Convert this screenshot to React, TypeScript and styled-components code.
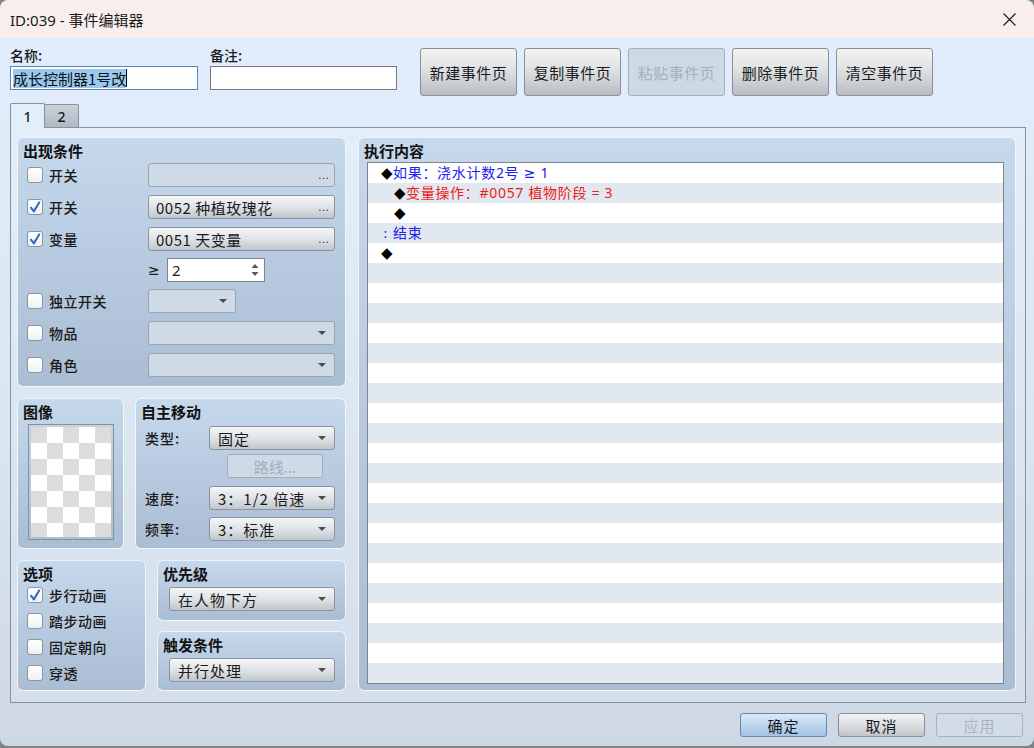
import styled, { createGlobalStyle } from 'styled-components'

const UI_FONT = `"Noto Sans CJK SC", "Noto Sans", "DejaVu Sans", sans-serif`

const GlobalStyle = createGlobalStyle`
    html, body {
        margin: 0;
        padding: 0;
        background: #7f8286;
    }
    body {
        font-family: ${UI_FONT};
        color: #1a1a1a;
    }
    * { box-sizing: border-box; }
`

type Cmd = { indent: number, marker: string, text?: string, tone?: 'blue' | 'red' }

const commands: Cmd[] = [
    { indent: 0, marker: '◆', text: '如果：浇水计数2号 ≥ 1', tone: 'blue' },
    { indent: 1, marker: '◆', text: '变量操作：#0057 植物阶段 = 3', tone: 'red' },
    { indent: 1, marker: '◆' },
    { indent: 0, marker: ':', text: '结束', tone: 'blue' },
    { indent: 0, marker: '◆' },
]
const TOTAL_ROWS = 26

function Check({ checked }: { checked?: boolean }) {
    return (
        <CheckBox>
            {checked && (
                <svg width="16" height="16" viewBox="0 0 16 16">
                    <path d="M3.6 8.2 L6.9 12.4 L12.6 2.8" fill="none" stroke="#3c67c0" strokeWidth="2.1" strokeLinejoin="round" />
                </svg>
            )}
        </CheckBox>
    )
}

function Select({ w, value, disabled }: { w: number, value?: string, disabled?: boolean }) {
    return (
        <Dropdown $w={w} $disabled={disabled}>
            <span>{value}</span>
            <Arrow />
        </Dropdown>
    )
}

function Picker({ value, disabled }: { value?: string, disabled?: boolean }) {
    return (
        <FieldButton $disabled={disabled}>
            <span>{value}</span>
            <Ellipsis>…</Ellipsis>
        </FieldButton>
    )
}

export default function App() {
    const rows = Array.from({ length: TOTAL_ROWS }, (_, i) => commands[i])

    return (
        <>
            <GlobalStyle />
            <Window>
                <TitleBar>
                    <TitleText>ID:039 - 事件编辑器</TitleText>
                    <svg width="13" height="13" viewBox="0 0 13 13">
                        <path d="M0.5 0.5 L12.5 12.5 M12.5 0.5 L0.5 12.5" stroke="#1a1a1a" strokeWidth="1.1" />
                    </svg>
                </TitleBar>

                <Body>
                    <TopRow>
                        <FieldBlock $w={188} $gap={12}>
                            <FieldLabel>名称:</FieldLabel>
                            <TextBox $focused>
                                <Selected>成长控制器1号改</Selected>
                                <Caret />
                            </TextBox>
                        </FieldBlock>
                        <FieldBlock $w={187} $gap={23}>
                            <FieldLabel>备注:</FieldLabel>
                            <TextBox />
                        </FieldBlock>
                        <PageButtons>
                            <PageButton>新建事件页</PageButton>
                            <PageButton>复制事件页</PageButton>
                            <PageButton $disabled>粘贴事件页</PageButton>
                            <PageButton>删除事件页</PageButton>
                            <PageButton>清空事件页</PageButton>
                        </PageButtons>
                    </TopRow>

                    <TabStrip>
                        <Tab $active>1</Tab>
                        <Tab>2</Tab>
                    </TabStrip>

                    <TabPane>
                        <LeftCol>
                            <Group $h={250} $pad="4px 10px 5px 5px">
                                <GroupTitle>出现条件</GroupTitle>
                                <CondRow>
                                    <CheckCell><Check /><CheckText>开关</CheckText></CheckCell>
                                    <Picker disabled />
                                </CondRow>
                                <CondRow>
                                    <CheckCell><Check checked /><CheckText>开关</CheckText></CheckCell>
                                    <Picker value="0052 种植玫瑰花" />
                                </CondRow>
                                <CondRow>
                                    <CheckCell><Check checked /><CheckText>变量</CheckText></CheckCell>
                                    <Picker value="0051 天变量" />
                                </CondRow>
                                <CondRow $h={30}>
                                    <CheckCell />
                                    <GeSign>≥</GeSign>
                                    <Spinner>
                                        <span>2</span>
                                        <SpinArrows>
                                            <svg width="8" height="14" viewBox="0 0 8 14">
                                                <path d="M4 1 L7.5 5 L0.5 5 Z M4 13 L7.5 9 L0.5 9 Z" fill="#5a5a5a" />
                                            </svg>
                                        </SpinArrows>
                                    </Spinner>
                                </CondRow>
                                <CondRow>
                                    <CheckCell><Check /><CheckText>独立开关</CheckText></CheckCell>
                                    <Select w={88} disabled />
                                </CondRow>
                                <CondRow>
                                    <CheckCell><Check /><CheckText>物品</CheckText></CheckCell>
                                    <Select w={187} disabled />
                                </CondRow>
                                <CondRow>
                                    <CheckCell><Check /><CheckText>角色</CheckText></CheckCell>
                                    <Select w={187} disabled />
                                </CondRow>
                            </Group>

                            <GroupRow>
                                <Group $w={107} $h={151} $pad="4px 0 0 5px">
                                    <GroupTitle>图像</GroupTitle>
                                    <Checker />
                                </Group>
                                <Group $w={211} $h={151} $pad="4px 10px 0 5px">
                                    <GroupTitle>自主移动</GroupTitle>
                                    <MoveRow $mt={6}>
                                        <MoveLabel>类型:</MoveLabel>
                                        <Select w={126} value="固定" />
                                    </MoveRow>
                                    <MoveRow $mt={4}>
                                        <MoveLabel />
                                        <RouteButton>路线...</RouteButton>
                                    </MoveRow>
                                    <MoveRow $mt={8}>
                                        <MoveLabel>速度:</MoveLabel>
                                        <Select w={126} value="3：1/2 倍速" />
                                    </MoveRow>
                                    <MoveRow $mt={7}>
                                        <MoveLabel>频率:</MoveLabel>
                                        <Select w={126} value="3：标准" />
                                    </MoveRow>
                                </Group>
                            </GroupRow>

                            <GroupRow>
                                <Group $w={129} $h={131} $pad="4px 0 0 5px">
                                    <GroupTitle>选项</GroupTitle>
                                    <OptRow><Check checked /><CheckText>步行动画</CheckText></OptRow>
                                    <OptRow><Check /><CheckText>踏步动画</CheckText></OptRow>
                                    <OptRow><Check /><CheckText>固定朝向</CheckText></OptRow>
                                    <OptRow><Check /><CheckText>穿透</CheckText></OptRow>
                                </Group>
                                <StackCol>
                                    <Group $h={61} $pad="4px 10px 0 5px">
                                        <GroupTitle>优先级</GroupTitle>
                                        <DropRow><Select w={166} value="在人物下方" /></DropRow>
                                    </Group>
                                    <Group $h={60} $pad="4px 10px 0 5px">
                                        <GroupTitle>触发条件</GroupTitle>
                                        <DropRow><Select w={166} value="并行处理" /></DropRow>
                                    </Group>
                                </StackCol>
                            </GroupRow>
                        </LeftCol>

                        <Group $grow $pad="4px 11px 6px 5px">
                            <GroupTitle>执行内容</GroupTitle>
                            <CommandList>
                                {rows.map((cmd, i) => (
                                    <CommandRow key={i} $odd={i % 2 === 1} $indent={cmd?.indent ?? 0}>
                                        {cmd && <Marker $colon={cmd.marker === ':'}>{cmd.marker}</Marker>}
                                        {cmd?.text && <CommandText $tone={cmd.tone}>{cmd.text}</CommandText>}
                                    </CommandRow>
                                ))}
                            </CommandList>
                        </Group>
                    </TabPane>

                    <Footer>
                        <DialogButton $kind="primary">确定</DialogButton>
                        <DialogButton>取消</DialogButton>
                        <DialogButton $kind="disabled">应用</DialogButton>
                    </Footer>
                </Body>
            </Window>
        </>
    )
}

const Window = styled.div`
    width: 1034px;
    height: 746px;
    display: flex;
    flex-direction: column;
    border-radius: 8px;
    overflow: hidden;
    box-shadow: inset 1px 0 0 #a9b2bc;
`

const TitleBar = styled.div`
    height: 38px;
    flex: none;
    display: flex;
    align-items: center;
    justify-content: space-between;
    padding: 0 18px 0 10px;
    background: #f8efed;
`

const TitleText = styled.div`
    font-family: "Noto Sans", "Noto Sans CJK SC", sans-serif;
    font-size: 15px;
    color: #1a1a1a;
`

const Body = styled.div`
    flex: 1;
    display: flex;
    flex-direction: column;
    padding-top: 8px;
    background: linear-gradient(180deg, #e1edfc 0%, #dbe6f3 55%, #cdd8e4 100%);
`

const TopRow = styled.div`
    height: 50px;
    display: flex;
    align-items: flex-start;
    padding-left: 10px;
`

const FieldBlock = styled.div<{ $w: number, $gap: number }>`
    width: ${p => p.$w}px;
    margin-right: ${p => p.$gap}px;
    display: flex;
    flex-direction: column;
`

const FieldLabel = styled.div`
    height: 20px;
    font-size: 14px;
    line-height: 18px;
    font-weight: 500;
`

const TextBox = styled.div<{ $focused?: boolean }>`
    height: 24px;
    display: flex;
    align-items: center;
    padding: 0 2px;
    background: #fff;
    border: 1px solid ${p => p.$focused ? '#5f84b4' : '#7a7a7a'};
    font-size: 15px;
`

const Selected = styled.span`
    background: #99c9ef;
    line-height: 19px;
    color: #111;
`

const Caret = styled.span`
    width: 1px;
    height: 18px;
    background: #000;
`

const PageButtons = styled.div`
    display: flex;
    gap: 7px;
    margin-top: 2px;
`

const PageButton = styled.div<{ $disabled?: boolean }>`
    width: 97px;
    height: 48px;
    display: flex;
    align-items: center;
    justify-content: center;
    border: 1px solid ${p => p.$disabled ? '#a5afba' : '#8a9096'};
    border-radius: 3px;
    background: ${p => p.$disabled ? '#cdd9e5' : 'linear-gradient(180deg, #f3f3f3 0%, #dcdfe2 50%, #b8bdc3 100%)'};
    color: ${p => p.$disabled ? '#a6b0ba' : '#1a1a1a'};
    font-size: 15px;
    letter-spacing: 0.5px;
`

const TabStrip = styled.div`
    height: 24px;
    margin-top: 7px;
    padding-left: 10px;
    display: flex;
    align-items: flex-end;
`

const Tab = styled.div<{ $active?: boolean }>`
    width: 35px;
    height: ${p => p.$active ? 25 : 23}px;
    margin-bottom: ${p => p.$active ? -1 : 0}px;
    margin-left: ${p => p.$active ? 0 : -1}px;
    position: relative;
    z-index: ${p => p.$active ? 1 : 0};
    display: flex;
    align-items: center;
    justify-content: center;
    border: 1px solid #8a9098;
    border-bottom: none;
    border-radius: 2px 2px 0 0;
    background: ${p => p.$active ? '#e3eefb' : 'linear-gradient(180deg, #cad2da 0%, #b0b9c3 100%)'};
    font-family: "Noto Sans", sans-serif;
    font-size: 14px;
    font-weight: 500;
`

const TabPane = styled.div`
    height: 576px;
    margin: 0 8px 0 10px;
    padding: 9px 9px 11px 6px;
    display: flex;
    gap: 12px;
    border: 1px solid #8a9098;
    background: linear-gradient(180deg, #e3eefb 0%, #d4dfeb 100%);
`

const LeftCol = styled.div`
    width: 329px;
    flex: none;
    display: flex;
    flex-direction: column;
    gap: 11px;
`

const GroupRow = styled.div`
    display: flex;
    gap: 11px;
`

const StackCol = styled.div`
    flex: 1;
    display: flex;
    flex-direction: column;
    gap: 10px;
`

const Group = styled.section<{ $w?: number, $h?: number, $pad: string, $grow?: boolean }>`
    ${p => p.$w ? `width: ${p.$w}px; flex: none;` : ''}
    ${p => p.$h ? `height: ${p.$h}px;` : ''}
    ${p => p.$grow ? 'flex: 1; display: flex; flex-direction: column;' : ''}
    padding: ${p => p.$pad};
    border: 1px solid rgba(246, 250, 253, 0.9);
    border-radius: 6px;
    background: linear-gradient(180deg, #c6d8ec 0%, #b8cadf 50%, #abbdd3 100%);
`

const GroupTitle = styled.div`
    height: 17px;
    font-size: 15px;
    line-height: 17px;
    font-weight: 700;
    color: #111;
`

const CondRow = styled.div<{ $h?: number }>`
    height: ${p => p.$h ?? 32}px;
    display: flex;
    align-items: center;
    padding-left: 4px;
`

const CheckCell = styled.div`
    width: 121px;
    flex: none;
    display: flex;
    align-items: center;
    gap: 6px;
`

const CheckBox = styled.div`
    width: 16px;
    height: 16px;
    flex: none;
    border: 1px solid #8e959d;
    border-radius: 3px;
    background: linear-gradient(180deg, #ffffff 0%, #eef1f4 100%);
    display: flex;
    align-items: center;
    justify-content: center;

    svg { margin: -1px; }
`

const CheckText = styled.span`
    font-size: 14px;
    font-weight: 500;
    letter-spacing: 0.5px;
`

const FieldButton = styled.div<{ $disabled?: boolean }>`
    width: 187px;
    height: 24px;
    display: flex;
    align-items: center;
    justify-content: space-between;
    padding: 0 5px 0 7px;
    border: 1px solid ${p => p.$disabled ? '#9aa5b0' : '#8a949e'};
    border-radius: 3px;
    background: ${p => p.$disabled ? '#cedae6' : 'linear-gradient(180deg, #f5f6f8 0%, #dde1e5 55%, #c0c6cc 100%)'};
    font-size: 15px;
    letter-spacing: 0.5px;
`

const Ellipsis = styled.span`
    font-family: "DejaVu Sans", sans-serif;
    font-size: 11px;
    color: #333;
    letter-spacing: 0;
`

const Dropdown = styled.div<{ $w: number, $disabled?: boolean }>`
    width: ${p => p.$w}px;
    height: 24px;
    flex: none;
    display: flex;
    align-items: center;
    justify-content: space-between;
    padding: 0 8px 0 8px;
    border: 1px solid ${p => p.$disabled ? '#9aa5b0' : '#8a949e'};
    border-radius: 3px;
    background: ${p => p.$disabled ? '#cedae6' : 'linear-gradient(180deg, #f5f6f8 0%, #dde1e5 55%, #c0c6cc 100%)'};
    font-size: 15px;
    letter-spacing: 1px;
`

const Arrow = styled.span`
    width: 0;
    height: 0;
    border-left: 4px solid transparent;
    border-right: 4px solid transparent;
    border-top: 4px solid #4d4d4d;
`

const GeSign = styled.span`
    width: 19px;
    font-family: "DejaVu Sans", sans-serif;
    font-size: 14px;
`

const Spinner = styled.div`
    width: 98px;
    height: 24px;
    display: flex;
    align-items: center;
    justify-content: space-between;
    padding: 0 5px 0 4px;
    background: #fff;
    border: 1px solid #7d848c;
    font-family: "Noto Sans", sans-serif;
    font-size: 15px;
`

const SpinArrows = styled.span`
    display: flex;
`

const Checker = styled.div`
    width: 86px;
    height: 116px;
    margin: 4px 0 0 5px;
    padding: 2px;
    border: 1px solid #8c8f93;
    background-color: #fff;
    background-image: conic-gradient(#fff 0 25%, #dcdcdc 0 50%, #fff 0 75%, #dcdcdc 0);
    background-size: 32px 32px;
    background-origin: content-box;
    background-clip: content-box;
`

const MoveRow = styled.div<{ $mt: number }>`
    height: 24px;
    margin-top: ${p => p.$mt}px;
    padding-left: 4px;
    display: flex;
    align-items: center;
`

const MoveLabel = styled.span`
    width: 64px;
    flex: none;
    font-size: 14px;
    font-weight: 500;
    letter-spacing: 1px;
`

const RouteButton = styled.div`
    width: 96px;
    height: 24px;
    margin-left: 18px;
    display: flex;
    align-items: center;
    justify-content: center;
    border: 1px solid #a3aeb9;
    border-radius: 3px;
    background: #cedae6;
    color: #a3adb8;
    font-size: 15px;
`

const OptRow = styled.div`
    height: 26px;
    padding-left: 4px;
    display: flex;
    align-items: center;
    gap: 6px;
`

const DropRow = styled.div`
    margin: 5px 0 0 6px;
`

const CommandList = styled.div`
    margin: 3px 0 0 3px;
    height: 522px;
    border: 1px solid #7d848c;
    overflow: hidden;
    background: #fff;
`

const CommandRow = styled.div<{ $odd: boolean, $indent: number }>`
    height: 20px;
    display: flex;
    align-items: center;
    padding-left: ${p => 13 + p.$indent * 13}px;
    background: ${p => p.$odd ? '#e2e8ef' : '#ffffff'};
    font-size: 14px;
    line-height: 20px;
`

const Marker = styled.span<{ $colon?: boolean }>`
    width: 12px;
    flex: none;
    overflow: hidden;
    font-family: "DejaVu Sans", sans-serif;
    font-size: ${p => p.$colon ? 14 : 15}px;
    line-height: 20px;
    color: ${p => p.$colon ? '#2020ee' : '#000'};
    padding-left: ${p => p.$colon ? 2 : 0}px;
`

const CommandText = styled.span<{ $tone?: 'blue' | 'red' }>`
    font-family: "Noto Sans", "DejaVu Sans", "Noto Sans CJK SC", sans-serif;
    color: ${p => p.$tone === 'red' ? '#ee1c1c' : '#2020ee'};
    letter-spacing: 0.7px;
    white-space: pre;
`

const Footer = styled.div`
    display: flex;
    justify-content: flex-end;
    gap: 11px;
    padding: 10px 11px 0 0;
`

const DialogButton = styled.div<{ $kind?: 'primary' | 'disabled' }>`
    width: 87px;
    height: 24px;
    display: flex;
    align-items: center;
    justify-content: center;
    border-radius: 3px;
    border: 1px solid ${p => p.$kind === 'primary' ? '#6a87ad' : p.$kind === 'disabled' ? '#a8b2bd' : '#8a9096'};
    background: ${p => p.$kind === 'primary'
        ? 'linear-gradient(180deg, #dbeafa 0%, #bcd4ee 50%, #a5c3e5 100%)'
        : p.$kind === 'disabled'
            ? '#d1dce8'
            : 'linear-gradient(180deg, #f3f3f3 0%, #dcdfe2 50%, #c0c4c9 100%)'};
    color: ${p => p.$kind === 'disabled' ? '#a9b4bf' : '#1a1a1a'};
    font-size: 15px;
    letter-spacing: 1px;
`
